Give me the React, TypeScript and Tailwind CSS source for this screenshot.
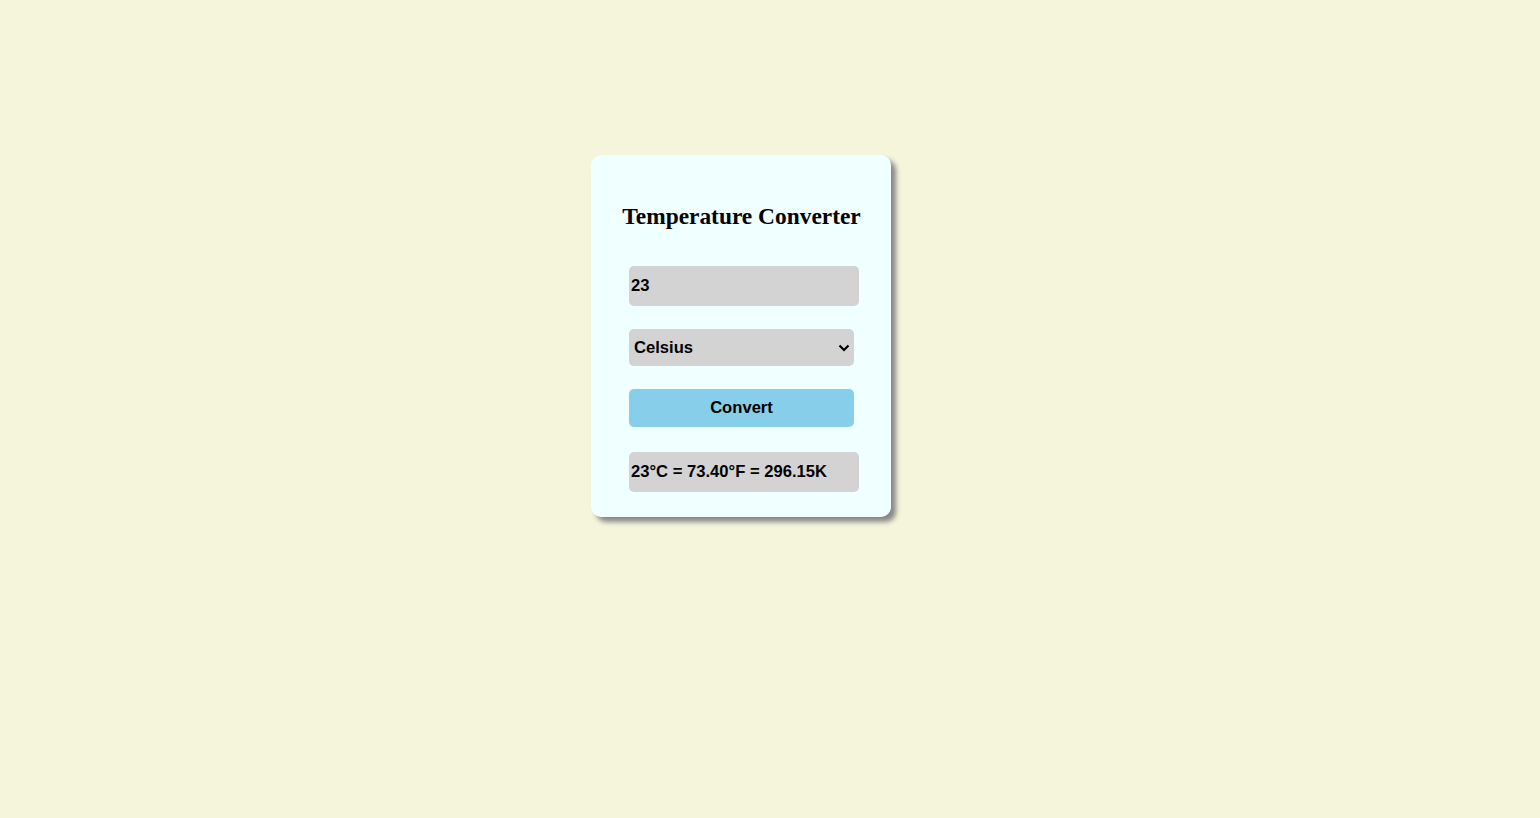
import React, { useState } from "react";

export default function App() {
  const [value, setValue] = useState("23");
  const [unit, setUnit] = useState("Celsius");
  return (
    <div className="min-h-[818px] w-full bg-[#f5f5dc] pt-[155px] pl-[591px]" style={{ fontFamily: '"Liberation Sans", Arial, sans-serif' }}>
      <div className="w-[300px] h-[362px] rounded-[10px] bg-[#f0ffff] shadow-[5px_5px_5px_#888] pt-[47px] pl-[38px]">
        <h2 className="w-[225px] whitespace-nowrap flex justify-center text-[23.4px] leading-[28px] font-bold text-black" style={{ fontFamily: '"Liberation Serif", "Times New Roman", serif' }}>
          Temperature Converter
        </h2>
        <input
          value={value}
          onChange={(e) => setValue(e.target.value)}
          className="mt-[36px] block w-[230px] h-[40px] rounded-[5px] bg-[#d3d3d3] pl-[2px] text-[16.6px] font-bold text-black outline-none"
        />
        <div className="relative mt-[23px] w-[225px] h-[37px]">
          <select
            value={unit}
            onChange={(e) => setUnit(e.target.value)}
            className="appearance-none block w-[225px] h-[37px] rounded-[5px] bg-[#d3d3d3] pl-[5px] pt-[2px] text-[16.6px] font-bold text-black outline-none border-none"
          >
            <option>Celsius</option>
            <option>Fahrenheit</option>
            <option>Kelvin</option>
          </select>
          <svg className="pointer-events-none absolute left-[209px] top-[15px]" width="12" height="8" viewBox="0 0 12 8">
            <path d="M1.5 1.5 L6 6 L10.5 1.5" fill="none" stroke="#000" strokeWidth="2.2" />
          </svg>
        </div>
        <button className="mt-[23px] block w-[225px] h-[38px] rounded-[5px] bg-[#87ceeb] text-[16.6px] font-bold text-black">
          Convert
        </button>
        <div className="mt-[25px] flex items-center w-[230px] h-[40px] rounded-[5px] bg-[#d3d3d3] pl-[2px] text-[16.6px] font-bold text-black">
          23°C = 73.40°F = 296.15K
        </div>
      </div>
    </div>
  );
}
